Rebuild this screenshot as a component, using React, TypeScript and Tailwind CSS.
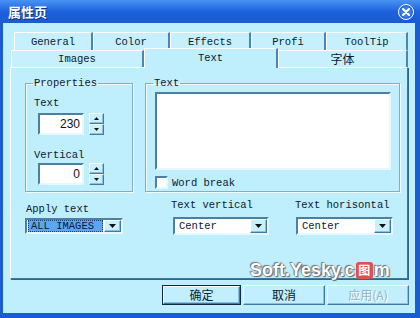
import { type FC } from 'react';

const mono = "font-['Liberation_Mono','Noto_Sans_CJK_SC',monospace] text-[10.5px] leading-[12px] text-[#0b1a33]";
const cjk = "font-['Noto_Sans_CJK_SC',sans-serif]";

const row1 = [
  { label: 'General', w: 'w-[79px]' },
  { label: 'Color', w: 'w-[77px]' },
  { label: 'Effects', w: 'w-[81px]' },
  { label: 'Profi', w: 'w-[75px]' },
  { label: 'ToolTip', w: 'w-[82px]' },
];

const raised =
  'border border-t-white border-l-white border-r-[#3f7aa8] border-b-[#3f7aa8] shadow-[inset_-1px_-1px_0_#8cc0dc]';
const sunken =
  'border-2 border-t-[#4d7fa3] border-l-[#4d7fa3] border-r-[#e6f8ff] border-b-[#e6f8ff] bg-white';

const Arrow: FC<{ up?: boolean }> = ({ up }) => (
  <svg width="5" height="3" viewBox="0 0 5 3" className="block">
    <path d={up ? 'M2.5 0 L5 3 L0 3 Z' : 'M0 0 L5 0 L2.5 3 Z'} fill="#111" />
  </svg>
);

const Spin: FC = () => (
  <div className="ml-[5px] flex w-[15px] flex-col">
    <div className={`${raised} flex h-[11px] items-center justify-center bg-[#c8f0fd]`}>
      <Arrow up />
    </div>
    <div className={`${raised} flex h-[11px] items-center justify-center bg-[#c8f0fd]`}>
      <Arrow />
    </div>
  </div>
);

const DropBtn: FC = () => (
  <div className={`${raised} flex w-[17px] items-center justify-center bg-[#c8f0fd]`}>
    <svg width="7" height="4" viewBox="0 0 7 4">
      <path d="M0 0 L7 0 L3.5 4 Z" fill="#111" />
    </svg>
  </div>
);

const Select: FC<{ w: string; h: string; value: string; selected?: boolean }> = ({ w, h, value, selected }) => (
  <div className={`${w} ${h} ${sunken} flex`}>
    <div className="flex flex-1 items-center px-[1px]">
      {selected ? (
        <span className={`${mono} flex h-full w-full items-center border border-dotted border-[#1b3f7a] bg-[#5da5f2] pl-[2px] text-[#0a2050]`}>
          {value}
        </span>
      ) : (
        <span className={`${mono} pl-[3px]`}>{value}</span>
      )}
    </div>
    <DropBtn />
  </div>
);

const Group: FC<{ title: string; w: string; children: React.ReactNode }> = ({ title, w, children }) => (
  <fieldset className={`${w} h-[115px] border border-[#86acc4] shadow-[inset_1px_1px_0_#f4fcff,1px_1px_0_#f4fcff]`}>
    <legend className={`${mono} ml-[7px] px-[1px]`}>{title}</legend>
    {children}
  </fieldset>
);

export default function App() {
  return (
    <div className="flex h-[318px] w-[420px] flex-col overflow-hidden bg-[#1a5cd4]">
      {/* title bar */}
      <div className="flex h-[23px] items-center justify-between bg-gradient-to-b from-[#4a92f4] via-[#1d62dc] to-[#1b5bd2] pl-[8px] pr-[6px]">
        <span className={`${cjk} text-[13px] font-bold leading-none text-white [text-shadow:1px_1px_0_#0b2f7a]`}>属性页</span>
        <div className="flex h-[16px] w-[16px] items-center justify-center rounded-full border border-white bg-[#3a7ff0] shadow-[inset_0_0_3px_#0d3fa8]">
          <svg width="8" height="8" viewBox="0 0 8 8">
            <path d="M1 1 L7 7 M7 1 L1 7" stroke="#fff" strokeWidth="2" strokeLinecap="round" />
          </svg>
        </div>
      </div>

      {/* body */}
      <div className="relative ml-[3px] mr-[5px] flex h-[290px] flex-col bg-[#bfeefd]">
        {/* tabs */}
        <div className="pt-[9px]">
          <div className="ml-[11px] flex h-[18px]">
            {row1.map((t) => (
              <div
                key={t.label}
                className={`${t.w} ${mono} flex items-center justify-center border-l border-t border-l-white border-t-white border-r-2 border-r-[#4a86b4] bg-[#c6f0fd]`}
              >
                {t.label}
              </div>
            ))}
          </div>
          <div className="ml-[8px] flex h-[17px] items-end">
            <div className={`${mono} flex h-[17px] w-[133px] items-center justify-center border-l border-t border-r-2 border-l-white border-t-white border-r-[#4a86b4] bg-[#c6f0fd]`}>
              Images
            </div>
            <div className={`${mono} relative z-10 -mb-[1px] flex h-[20px] w-[134px] items-start justify-center border-l border-t border-r-2 border-l-white border-t-white border-r-[#4a86b4] bg-[#bfeefd] pt-[3px]`}>
              Text
            </div>
            <div className={`${cjk} flex h-[17px] w-[130px] items-center justify-center border-l border-t border-r-2 border-l-white border-t-white border-r-[#4a86b4] bg-[#c6f0fd] text-[12px] text-[#0b1a33]`}>
              字体
            </div>
          </div>
        </div>

        {/* panel */}
        <div className="ml-[7px] h-[212px] w-[398px] border border-t-white border-l-white border-r-[#3c78a6] border-b-[#3c78a6] shadow-[1px_1px_0_#2f6690]">
          <div className="ml-[14px] mt-[9px] flex gap-[12px]">
            <Group title="Properties" w="w-[108px]">
              <div className="pl-[8px]">
                <div className={`${mono} mt-[8px]`}>Text</div>
                <div className="ml-[4px] mt-[4px] flex h-[22px]">
                  <div className={`${sunken} flex w-[46px] items-center justify-end pr-[2px] font-['Liberation_Sans',sans-serif] text-[12px] text-[#111]`}>
                    230
                  </div>
                  <Spin />
                </div>
                <div className={`${mono} mt-[14px]`}>Vertical</div>
                <div className="ml-[4px] mt-[2px] flex h-[22px]">
                  <div className={`${sunken} flex w-[46px] items-center justify-end pr-[2px] font-['Liberation_Sans',sans-serif] text-[12px] text-[#111]`}>
                    0
                  </div>
                  <Spin />
                </div>
              </div>
            </Group>
            <Group title="Text" w="w-[255px]">
              <div className="pl-[9px]">
                <div className={`${sunken} mt-[3px] h-[78px] w-[236px]`} />
                <div className="mt-[6px] flex items-center gap-[4px]">
                  <div className={`${sunken} h-[13px] w-[13px]`} />
                  <span className={mono}>Word break</span>
                </div>
              </div>
            </Group>
          </div>

          <div className="ml-[14px] mt-[7px] flex">
            <div className="mt-[4px] flex w-[98px] flex-col">
              <span className={`${mono} pl-[1px]`}>Apply text</span>
              <div className="mt-[3px]">
                <Select w="w-[98px]" h="h-[16px]" value="ALL IMAGES" selected />
              </div>
            </div>
            <div className="ml-[48px] flex flex-col">
              <span className={mono}>Text vertical</span>
              <div className="ml-[2px] mt-[6px]">
                <Select w="w-[96px]" h="h-[18px]" value="Center" />
              </div>
            </div>
            <div className="ml-[26px] flex flex-col">
              <span className={mono}>Text horisontal</span>
              <div className="ml-[1px] mt-[6px]">
                <Select w="w-[97px]" h="h-[18px]" value="Center" />
              </div>
            </div>
          </div>
        </div>

        {/* buttons */}
        <div className="ml-[159px] mt-[6px] flex gap-[2px]">
          <div className="h-[20px] w-[79px] border border-[#0f2a4a] bg-[#c2effd]">
            <div className={`${raised} ${cjk} flex h-full items-center justify-center text-[12px] text-[#0b1a33]`}>确定</div>
          </div>
          <div className={`${raised} ${cjk} flex h-[20px] w-[82px] items-center justify-center bg-[#c2effd] text-[12px] text-[#0b1a33]`}>取消</div>
          <div className={`${raised} ${cjk} flex h-[20px] w-[82px] items-center justify-center bg-[#c2effd] text-[12px] text-[#93b4c6] [text-shadow:1px_1px_0_#fff]`}>
            应用(A)
          </div>
        </div>

        {/* watermark */}
        <div className="pointer-events-none absolute left-[247px] top-[238px] flex items-center font-['Liberation_Sans',sans-serif] text-[18px] font-bold leading-none text-white [text-shadow:0_0_1px_#555,1px_1px_1px_#666,-1px_-1px_1px_#777]">
          Soft.Yesky.c
          <span className={`${cjk} mx-[1px] flex h-[17px] w-[17px] items-center justify-center rounded-[3px] bg-[#e0504f] text-[12px] font-bold [text-shadow:none]`}>图</span>
          m
        </div>
      </div>
    </div>
  );
}
